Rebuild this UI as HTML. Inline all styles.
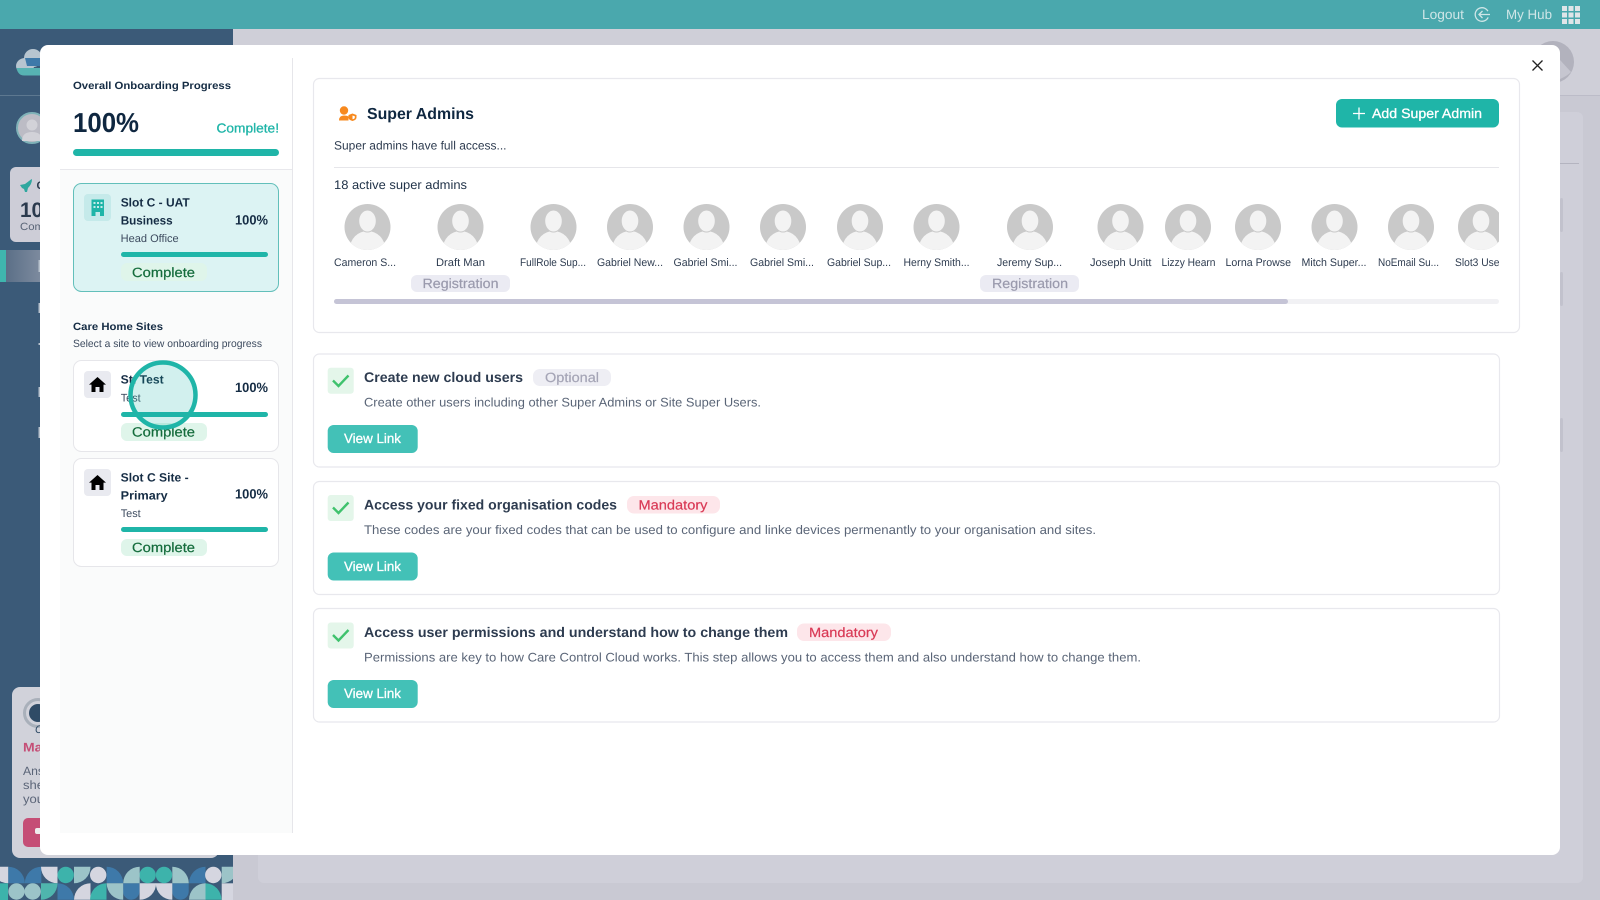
<!DOCTYPE html>
<html lang="en"><head><meta charset="utf-8"><title>Onboarding</title>
<style>
html,body{margin:0;padding:0;width:1600px;height:900px;overflow:hidden;background:#c9c9d3}
svg{display:block}
text{font-family:"Liberation Sans",Arial,sans-serif;text-rendering:geometricPrecision;white-space:pre}
.b{font-weight:700}
.m{stroke-width:.2}
</style></head><body>
<svg xmlns="http://www.w3.org/2000/svg" width="1600" height="900" viewBox="0 0 1600 900">
<defs>
<path id="q1" d="M0 16.5A16.5 16.5 0 0 1 16.5 0V16.5Z"/>
<path id="q2" d="M0 0A16.5 16.5 0 0 1 16.5 16.5H0Z"/>
<path id="q3" d="M0 0H16.5A16.5 16.5 0 0 1 0 16.5Z"/>
<path id="q4" d="M16.5 0V16.5A16.5 16.5 0 0 1 0 0Z"/>
<clipPath id="ac"><circle cx="0" cy="0" r="23"/></clipPath>
<clipPath id="sc"><rect x="334" y="195" width="1165" height="80"/></clipPath>
<clipPath id="pt"><rect x="0" y="860" width="233" height="40"/></clipPath>
<linearGradient id="act" x1="0" x2="1" y1="0" y2="0"><stop offset="0" stop-color="#5b6f87"/><stop offset="1" stop-color="#828fa2"/></linearGradient>
<g id="av"><circle r="23" fill="#c9c9c9"/><g clip-path="url(#ac)"><ellipse cx="0" cy="21.5" rx="17.5" ry="17.5" fill="#f3f3f3"/><ellipse cx="0" cy="-6" rx="8.8" ry="11" fill="#f3f3f3" stroke="#c9c9c9" stroke-width="1"/></g></g>
<g id="house"><path d="M8 0L16.5 7.6H14V15H10V10H6V15H2V7.6H-.5Z" fill="#000"/></g>
<path id="chk" d="M0 6.5L5.5 12L15.5 1.5" fill="none" stroke="#3fc26d" stroke-width="2.4"/>
</defs>

<!-- background app -->
<rect width="1600" height="900" fill="#c9c9d3"/>
<rect y="29" x="233" width="1367" height="66" fill="#cfcfd8"/>
<rect x="233" y="95" width="1367" height="1" fill="#bcbcc8"/>
<rect x="258" y="112" width="1325" height="771" rx="6" fill="#cfcfd9"/>
<rect x="1560" y="163" width="19" height="1" fill="#b4b4c0"/>
<rect x="1560" y="198" width="3" height="34" rx="2" fill="#c2c2cd"/>
<rect x="1560" y="272" width="3" height="34" rx="2" fill="#c2c2cd"/>
<rect x="1560" y="418" width="3" height="34" rx="2" fill="#c2c2cd"/>
<circle cx="1553" cy="62" r="21" fill="#b2b2bd"/>
<path d="M1560 79Q1567 76 1571 72L1560 60Z" fill="#c6c6d0"/>
<rect width="1600" height="29" fill="#4aa8ad"/>
<text x="1422" y="19" font-size="13.5" fill="#cfe6e7" textLength="42" lengthAdjust="spacingAndGlyphs">Logout</text>
<circle cx="1482" cy="14.5" r="6.8" fill="none" stroke="#cfe6e7" stroke-width="1.3" stroke-dasharray="36 7" transform="rotate(25 1482 14.5)"/>
<path d="M1490 14.5H1479M1482.5 11L1479 14.5L1482.5 18" fill="none" stroke="#cfe6e7" stroke-width="1.3"/>
<text x="1506" y="19" font-size="13.5" fill="#cfe6e7" textLength="46" lengthAdjust="spacingAndGlyphs">My Hub</text>
<g fill="#dfe5e8"><rect x="1562" y="6" width="5" height="5"/><rect x="1568.5" y="6" width="5" height="5"/><rect x="1575" y="6" width="5" height="5"/><rect x="1562" y="12.5" width="5" height="5"/><rect x="1568.5" y="12.5" width="5" height="5"/><rect x="1575" y="12.5" width="5" height="5"/><rect x="1562" y="19" width="5" height="5"/><rect x="1568.5" y="19" width="5" height="5"/><rect x="1575" y="19" width="5" height="5"/></g>

<!-- sidebar -->
<rect y="29" width="233" height="871" fill="#3b5a78"/>
<rect y="95" width="233" height="1" fill="#5d7890"/>
<ellipse cx="25" cy="66" rx="9" ry="8" fill="#b7c5d0"/>
<ellipse cx="33" cy="58" rx="9" ry="9" fill="#b7c5d0"/>
<path d="M25 58H42V66H27Z" fill="#3e79a9"/>
<path d="M16.5 68H42V75.5H24Q18 75.5 16.5 68Z" fill="#57b3b3"/>
<circle cx="32" cy="128" r="15" fill="#bcbcc5" stroke="#7fb2b8" stroke-width="2"/>
<circle cx="32" cy="125" r="5.5" fill="#d2d2d8"/>
<path d="M22 141Q22 132 32 132Q42 132 42 141Z" fill="#d2d2d8"/>
<rect x="10" y="167" width="40" height="75" rx="6" fill="#cdcdd7"/>
<path d="M20 185L25 184L31 179.500L32 179Q32 184 28 188L27 192L25 192L24 189L22 188Z" fill="#2fa79f"/>
<text x="36.500" y="189" class="b" font-size="11" fill="#2b3a4d">C</text>
<text x="20" y="217" class="b" font-size="21" fill="#2b3a4d" textLength="23" lengthAdjust="spacingAndGlyphs">10</text>
<text x="20" y="230" font-size="10.5" fill="#5a6577" textLength="24" lengthAdjust="spacingAndGlyphs">Com</text>
<rect x="6" y="250" width="40" height="32" fill="url(#act)"/>
<rect x="0" y="250" width="6" height="32" fill="#3fb6ae"/>
<rect x="12" y="687" width="207" height="171" rx="8" fill="#d1d2da"/>
<circle cx="38" cy="713" r="13.500" fill="none" stroke="#a9b0ba" stroke-width="3"/>
<circle cx="38" cy="713" r="9" fill="#2f4b66"/>
<text x="35" y="733" font-size="11" font-style="italic" fill="#2f4b66">C</text>
<text x="23" y="751.7" class="b" font-size="12.5" fill="#c54e76" textLength="28" lengthAdjust="spacingAndGlyphs">Man</text>
<text x="23" y="775" font-size="12" fill="#5b6578" textLength="21" lengthAdjust="spacingAndGlyphs">Ans</text>
<text x="23" y="789" font-size="12" fill="#5b6578" textLength="21" lengthAdjust="spacingAndGlyphs">she</text>
<text x="23" y="803" font-size="12" fill="#5b6578" textLength="21" lengthAdjust="spacingAndGlyphs">you</text>
<rect x="23" y="818" width="30" height="29" rx="5" fill="#c54e76"/>
<rect x="35" y="828" width="8" height="6" rx="2" fill="#eee"/>
<g fill="#b9c3ce"><rect x="38.500" y="260" width="2" height="12"/><rect x="38.500" y="303" width="2" height="10"/><rect x="38.500" y="343" width="2" height="2"/><rect x="38.500" y="387" width="2" height="10"/><rect x="38.500" y="427" width="2" height="11"/></g>

<!-- pattern -->
<g clip-path="url(#pt)">
<g fill="#d5d6e0"><use href="#q4" transform="translate(-8.2 866.8)"/></g>
<g fill="#3e79a9"><use href="#q2" transform="translate(8.3 866.8)"/><use href="#q1" transform="translate(24.8 866.8)"/><use href="#q2" transform="translate(106.7 866.8)"/><use href="#q1" transform="translate(189 866.8)"/><use href="#q2" transform="translate(57.5 883.3)"/><circle cx="131.2" cy="891.5" r="8.2"/><rect x="123.2" y="883.3" width="16.2" height="8"/><circle cx="180.5" cy="891.5" r="8.2"/><rect x="172.300" y="883.3" width="16.4" height="8"/></g>
<g fill="#d5d6e0"><use href="#q4" transform="translate(41 866.8)"/><circle cx="98.2" cy="875" r="8.2"/><circle cx="213.3" cy="875" r="8.2"/><use href="#q1" transform="translate(74 883.3)"/><use href="#q3" transform="translate(139.600 883.3)"/><use href="#q4" transform="translate(155.8 883.3)"/><rect x="221.7" y="883.3" width="11.3" height="16.7"/></g>
<g fill="#3db3ab"><circle cx="65.700" cy="875" r="8.2"/><circle cx="147.6" cy="875" r="8.2"/><circle cx="164" cy="875" r="8.2"/><use href="#q1" transform="translate(90 883.3)"/><use href="#q2" transform="translate(205 883.3)"/><rect x="0" y="883.3" width="8" height="16.7"/></g>
<g fill="#4fb5ad"><use href="#q3" transform="translate(41 883.3)"/></g>
<g fill="#9cc4c8"><use href="#q3" transform="translate(74 866.8)"/><use href="#q1" transform="translate(123.200 866.8)"/><use href="#q2" transform="translate(172.300 866.8)"/><use href="#q3" transform="translate(221.7 866.8)"/><circle cx="16.500" cy="891.5" r="8.2"/><circle cx="32.700" cy="891.5" r="8.2"/><use href="#q4" transform="translate(106.7 883.3)"/><use href="#q1" transform="translate(189 883.3)"/></g>
</g>

<!-- modal -->
<rect x="40" y="45" width="1520" height="810" rx="8" fill="#fff"/>
<rect x="60" y="170" width="233" height="663" fill="#fafbfb"/>
<rect x="60" y="169" width="233" height="1" fill="#e8e8ec"/>
<rect x="292" y="58" width="1" height="775" fill="#e6e6ea"/>

<text x="73" y="89" class="b" font-size="10.5" fill="#152c44" textLength="158" lengthAdjust="spacingAndGlyphs">Overall Onboarding Progress</text>
<text x="73" y="132" class="b" font-size="27.500" fill="#0f2740" textLength="66" lengthAdjust="spacingAndGlyphs">100%</text>
<text x="216.5" y="132.5" font-size="13" fill="#1fb5a8" stroke="#1fb5a8" stroke-width=".3" textLength="62.5" lengthAdjust="spacingAndGlyphs">Complete!</text>
<rect x="73" y="149" width="206" height="7" rx="3.5" fill="#1fb5a8"/>

<!-- head office -->
<rect x="73.5" y="183.5" width="205" height="108" rx="8" fill="#dcf3f3" stroke="#62bfba"/>
<rect x="84" y="194" width="27" height="27" rx="4" fill="#c5eaea"/>
<path d="M91.5 199.5H104V216H100V212H95.5V216H91.5Z" fill="#1fb5a8"/>
<g fill="#c5eaea"><rect x="93.5" y="202" width="2" height="2"/><rect x="97" y="202" width="2" height="2"/><rect x="100.5" y="202" width="2" height="2"/><rect x="93.5" y="206" width="2" height="2"/><rect x="97" y="206" width="2" height="2"/><rect x="100.5" y="206" width="2" height="2"/></g>
<text x="120.7" y="206.5" class="b" font-size="12" fill="#152c44" textLength="69" lengthAdjust="spacingAndGlyphs">Slot C - UAT</text>
<text x="120.7" y="224.3" class="b" font-size="12" fill="#152c44" textLength="52" lengthAdjust="spacingAndGlyphs">Business</text>
<text x="235" y="224.3" class="b" font-size="13.5" fill="#152c44" textLength="33" lengthAdjust="spacingAndGlyphs">100%</text>
<text x="120.7" y="242" font-size="11" fill="#3c4a5e" textLength="58" lengthAdjust="spacingAndGlyphs">Head Office</text>
<rect x="121" y="252" width="147" height="5" rx="2.5" fill="#1fb5a8"/>
<rect x="121" y="263" width="86" height="18" rx="6" fill="#dff5ea"/>
<text x="132" y="277" font-size="13.5" fill="#146c3c" stroke="#146c3c" class="m" textLength="63" lengthAdjust="spacingAndGlyphs">Complete</text>

<text x="73" y="330" class="b" font-size="10.5" fill="#152c44" textLength="90" lengthAdjust="spacingAndGlyphs">Care Home Sites</text>
<text x="73" y="347" font-size="10.5" fill="#3c4a5e" textLength="189" lengthAdjust="spacingAndGlyphs">Select a site to view onboarding progress</text>

<!-- site 1 -->
<rect x="73.5" y="360.5" width="205" height="91" rx="8" fill="#fff" stroke="#e6e6ea"/>
<rect x="84" y="371" width="27" height="27" rx="4" fill="#e9eaf0"/>
<use href="#house" transform="translate(89.5 377)"/>
<text x="120.7" y="383.3" class="b" font-size="12" fill="#152c44" textLength="43" lengthAdjust="spacingAndGlyphs">St. Test</text>
<text x="235" y="392" class="b" font-size="13.5" fill="#152c44" textLength="33" lengthAdjust="spacingAndGlyphs">100%</text>
<text x="120.7" y="401.3" font-size="11" fill="#3c4a5e" textLength="20" lengthAdjust="spacingAndGlyphs">Test</text>
<rect x="121" y="412" width="147" height="5" rx="2.5" fill="#1fb5a8"/>
<rect x="121" y="423" width="86" height="18" rx="6" fill="#dff5ea"/>
<text x="132" y="436.5" font-size="13.5" fill="#146c3c" stroke="#146c3c" class="m" textLength="63" lengthAdjust="spacingAndGlyphs">Complete</text>

<!-- site 2 -->
<rect x="73.5" y="458.5" width="205" height="108" rx="8" fill="#fff" stroke="#e6e6ea"/>
<rect x="84" y="469" width="27" height="27" rx="4" fill="#e9eaf0"/>
<use href="#house" transform="translate(89.5 475)"/>
<text x="120.7" y="481.3" class="b" font-size="12" fill="#152c44" textLength="68" lengthAdjust="spacingAndGlyphs">Slot C Site -</text>
<text x="120.7" y="499.3" class="b" font-size="12" fill="#152c44" textLength="47" lengthAdjust="spacingAndGlyphs">Primary</text>
<text x="235" y="498.3" class="b" font-size="13.5" fill="#152c44" textLength="33" lengthAdjust="spacingAndGlyphs">100%</text>
<text x="120.7" y="517" font-size="11" fill="#3c4a5e" textLength="20" lengthAdjust="spacingAndGlyphs">Test</text>
<rect x="121" y="527" width="147" height="5" rx="2.5" fill="#1fb5a8"/>
<rect x="121" y="539" width="86" height="17" rx="6" fill="#dff5ea"/>
<text x="132" y="552" font-size="13.5" fill="#146c3c" stroke="#146c3c" class="m" textLength="63" lengthAdjust="spacingAndGlyphs">Complete</text>

<!-- click circle -->
<circle cx="163" cy="395" r="32.5" fill="#1fb5a8" fill-opacity=".2" stroke="#1fb5a8" stroke-width="4.5"/>

<!-- close -->
<path d="M1532.5 60.5L1542.5 70.5M1542.5 60.5L1532.5 70.5" stroke="#222" stroke-width="1.3" fill="none"/>

<!-- super admins -->
<rect x="313.5" y="78.5" width="1206" height="254" rx="6" fill="#fff" stroke="#e8e8ed" stroke-width="1.2"/>
<circle cx="344" cy="110.5" r="4.2" fill="#f7891e"/>
<path d="M339 120.5Q339 115.500 344 115.500Q347 115.500 348.500 116.500V120.5Z" fill="#f7891e"/>
<path d="M352.500 113.500L356.500 115V117.500Q356.500 120 352.500 121Q348.500 120 348.500 117.500V115Z" fill="#f7891e"/>
<path d="M352.500 115.500L354.800 116.300V117.500Q354.800 118.800 352.500 119.300Z" fill="#fff"/>
<text x="367" y="119" class="b" font-size="16" fill="#0f2740" textLength="107" lengthAdjust="spacingAndGlyphs">Super Admins</text>
<rect x="1336" y="99" width="163" height="28.5" rx="6" fill="#1fb5a8"/>
<path d="M1353 113.5H1365M1359 107.5V119.5" stroke="#fff" stroke-width="1.3" fill="none"/>
<text x="1372" y="118" font-size="13.5" fill="#fff" stroke="#fff" stroke-width=".3" textLength="110" lengthAdjust="spacingAndGlyphs">Add Super Admin</text>
<text x="334" y="149.3" font-size="12" fill="#2e3c50" textLength="172.5" lengthAdjust="spacingAndGlyphs">Super admins have full access...</text>
<rect x="334" y="167" width="1165" height="1" fill="#e6e6ea"/>
<text x="334" y="189" font-size="12.5" fill="#1f3147" textLength="133" lengthAdjust="spacingAndGlyphs">18 active super admins</text>

<g clip-path="url(#sc)">
<use href="#av" transform="translate(367.5 227)"/><use href="#av" transform="translate(460.5 227)"/><use href="#av" transform="translate(553.5 227)"/><use href="#av" transform="translate(630 227)"/><use href="#av" transform="translate(706.5 227)"/><use href="#av" transform="translate(783 227)"/><use href="#av" transform="translate(860 227)"/><use href="#av" transform="translate(936.5 227)"/><use href="#av" transform="translate(1030 227)"/><use href="#av" transform="translate(1120.5 227)"/><use href="#av" transform="translate(1188 227)"/><use href="#av" transform="translate(1258 227)"/><use href="#av" transform="translate(1334.5 227)"/><use href="#av" transform="translate(1411 227)"/><use href="#av" transform="translate(1481 227)"/>
<g font-size="11" fill="#2e3c50">
<text x="334" y="266" textLength="62" lengthAdjust="spacingAndGlyphs">Cameron S...</text>
<text x="436" y="266" textLength="49" lengthAdjust="spacingAndGlyphs">Draft Man</text>
<text x="520" y="266" textLength="66" lengthAdjust="spacingAndGlyphs">FullRole Sup...</text>
<text x="597" y="266" textLength="66" lengthAdjust="spacingAndGlyphs">Gabriel New...</text>
<text x="673.5" y="266" textLength="64" lengthAdjust="spacingAndGlyphs">Gabriel Smi...</text>
<text x="750" y="266" textLength="64" lengthAdjust="spacingAndGlyphs">Gabriel Smi...</text>
<text x="827" y="266" textLength="64" lengthAdjust="spacingAndGlyphs">Gabriel Sup...</text>
<text x="903.5" y="266" textLength="66" lengthAdjust="spacingAndGlyphs">Herny Smith...</text>
<text x="997" y="266" textLength="65" lengthAdjust="spacingAndGlyphs">Jeremy Sup...</text>
<text x="1090" y="266" textLength="61.5" lengthAdjust="spacingAndGlyphs">Joseph Unitt</text>
<text x="1161.5" y="266" textLength="54" lengthAdjust="spacingAndGlyphs">Lizzy Hearn</text>
<text x="1225.5" y="266" textLength="65.5" lengthAdjust="spacingAndGlyphs">Lorna Prowse</text>
<text x="1301.5" y="266" textLength="65" lengthAdjust="spacingAndGlyphs">Mitch Super...</text>
<text x="1378" y="266" textLength="61" lengthAdjust="spacingAndGlyphs">NoEmail Su...</text>
<text x="1455" y="266" textLength="44.5" lengthAdjust="spacingAndGlyphs">Slot3 Use</text>
</g></g>
<rect x="411" y="275" width="99" height="17" rx="6" fill="#ebebf3"/>
<text x="422.5" y="288" font-size="13.5" fill="#9a9aad" stroke="#9a9aad" class="m" textLength="76" lengthAdjust="spacingAndGlyphs">Registration</text>
<rect x="980" y="275" width="99" height="17" rx="6" fill="#ebebf3"/>
<text x="992" y="288" font-size="13.5" fill="#9a9aad" stroke="#9a9aad" class="m" textLength="76" lengthAdjust="spacingAndGlyphs">Registration</text>
<rect x="334" y="299" width="1165" height="5" rx="2.5" fill="#f1f1f4"/>
<rect x="334" y="299" width="954" height="5" rx="2.5" fill="#c5c4d6"/>

<!-- task 1 -->
<rect x="313.5" y="354" width="1186" height="113" rx="6" fill="#fff" stroke="#e8e8ed" stroke-width="1.2"/>
<rect x="327.7" y="367.7" width="26" height="26" rx="3" fill="#e4f6ea"/>
<use href="#chk" transform="translate(333 374)"/>
<text x="364" y="382" class="b" font-size="14" fill="#2e3c50" textLength="159" lengthAdjust="spacingAndGlyphs">Create new cloud users</text>
<rect x="533" y="369" width="78" height="17" rx="7" fill="#eeeef4"/>
<text x="545" y="382" font-size="13.5" fill="#a5a5b6" stroke="#a5a5b6" class="m" textLength="54" lengthAdjust="spacingAndGlyphs">Optional</text>
<text x="364" y="406.7" font-size="12.5" fill="#5a6577" textLength="397" lengthAdjust="spacingAndGlyphs">Create other users including other Super Admins or Site Super Users.</text>
<rect x="327.7" y="425" width="90" height="28" rx="6" fill="#43c1b7"/>
<text x="344" y="443" font-size="13.5" fill="#fff" stroke="#fff" stroke-width=".3" textLength="57" lengthAdjust="spacingAndGlyphs">View Link</text>

<!-- task 2 -->
<rect x="313.5" y="481.5" width="1186" height="113" rx="6" fill="#fff" stroke="#e8e8ed" stroke-width="1.2"/>
<rect x="327.7" y="495" width="26" height="26" rx="3" fill="#e4f6ea"/>
<use href="#chk" transform="translate(333 501)"/>
<text x="364" y="509.5" class="b" font-size="14" fill="#2e3c50" textLength="253" lengthAdjust="spacingAndGlyphs">Access your fixed organisation codes</text>
<rect x="627" y="496" width="93" height="17.5" rx="7" fill="#fde6ea"/>
<text x="638.5" y="509.5" font-size="13.5" fill="#d93a56" stroke="#d93a56" class="m" textLength="69" lengthAdjust="spacingAndGlyphs">Mandatory</text>
<text x="364" y="534" font-size="12.5" fill="#5a6577" textLength="732" lengthAdjust="spacingAndGlyphs">These codes are your fixed codes that can be used to configure and linke devices permenantly to your organisation and sites.</text>
<rect x="327.7" y="552.5" width="90" height="28" rx="6" fill="#43c1b7"/>
<text x="344" y="571" font-size="13.5" fill="#fff" stroke="#fff" stroke-width=".3" textLength="57" lengthAdjust="spacingAndGlyphs">View Link</text>

<!-- task 3 -->
<rect x="313.5" y="608.5" width="1186" height="113.5" rx="6" fill="#fff" stroke="#e8e8ed" stroke-width="1.2"/>
<rect x="327.7" y="622.500" width="26" height="26" rx="3" fill="#e4f6ea"/>
<use href="#chk" transform="translate(333 628.500)"/>
<text x="364" y="637" class="b" font-size="14" fill="#2e3c50" textLength="424" lengthAdjust="spacingAndGlyphs">Access user permissions and understand how to change them</text>
<rect x="797" y="623.5" width="94" height="17.5" rx="7" fill="#fde6ea"/>
<text x="809" y="637" font-size="13.5" fill="#d93a56" stroke="#d93a56" class="m" textLength="69" lengthAdjust="spacingAndGlyphs">Mandatory</text>
<text x="364" y="661.7" font-size="12.5" fill="#5a6577" textLength="777" lengthAdjust="spacingAndGlyphs">Permissions are key to how Care Control Cloud works. This step allows you to access them and also understand how to change them.</text>
<rect x="327.7" y="680" width="90" height="28" rx="6" fill="#43c1b7"/>
<text x="344" y="698" font-size="13.5" fill="#fff" stroke="#fff" stroke-width=".3" textLength="57" lengthAdjust="spacingAndGlyphs">View Link</text>
</svg>
</body></html>
